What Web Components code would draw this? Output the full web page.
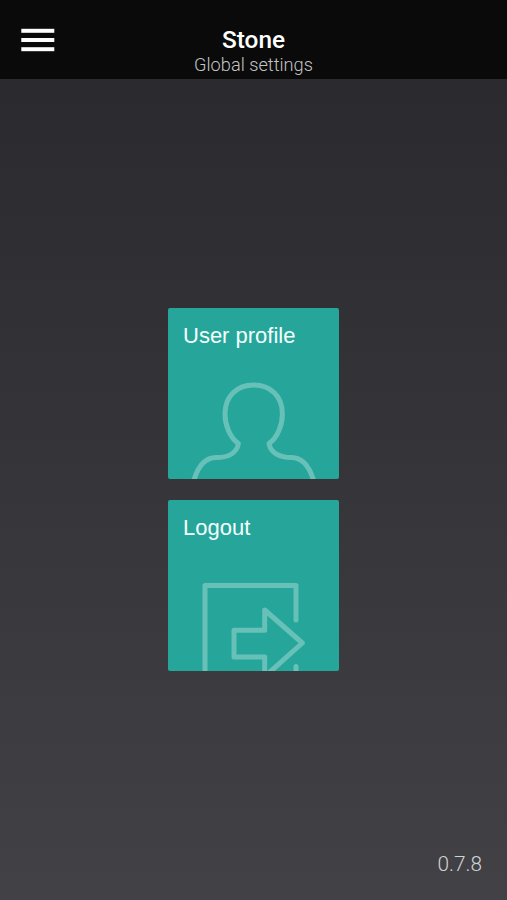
<!DOCTYPE html>
<html lang="en">
<head>
<meta charset="utf-8">
<title>Stone</title>
<style>
body {
  margin: 0;
}
</style>
</head>
<body>

<app-screen>
  <app-header slot="header">
    <span slot="title">Stone</span>
    <span slot="subtitle">Global settings</span>
  </app-header>
  <menu-tile icon="profile">User profile</menu-tile>
  <menu-tile icon="logout">Logout</menu-tile>
  <span slot="version">0.7.8</span>
</app-screen>

<script>
class AppScreen extends HTMLElement {
  connectedCallback() {
    const shadow = this.attachShadow({mode: 'open'});
    shadow.innerHTML = `
<style>
:host {
  display: flex;
  flex-direction: column;
  height: 900px;
  overflow: hidden;
  background: linear-gradient(#27272b, #2b2b2f 10%, #353539 50%, #424146);
  font-family: Roboto, sans-serif;
}
main {
  flex: 1;
  display: flex;
  flex-direction: column;
  align-items: center;
  justify-content: center;
  gap: 21px;
  padding-top: 48px;
}
footer {
  display: flex;
  justify-content: flex-end;
  padding: 0 25px 23px;
  color: #d2d2d5;
  font-size: 20.8px;
  font-weight: 300;
  line-height: 25px;
}
</style>
<slot name="header"></slot>
<main><slot></slot></main>
<footer><slot name="version"></slot></footer>
`;
  }
}

customElements.define('app-screen', AppScreen);

/*******************************/

class AppHeader extends HTMLElement {
  connectedCallback() {
    const shadow = this.attachShadow({mode: 'open'});
    shadow.innerHTML = `
<style>
:host {
  display: grid;
  grid-template-columns: 76px 1fr 76px;
  height: 79px;
  background: #0a0a0a;
}
svg {
  display: block;
  margin: 28px 0 0 21px;
}
.titles {
  padding-top: 26px;
  text-align: center;
}
.title {
  color: #fff;
  font-size: 24.4px;
  font-weight: 500;
  line-height: 28px;
}
.subtitle {
  color: #c4c4c4;
  font-size: 18.2px;
  font-weight: 300;
  line-height: 22px;
}
</style>
<svg width="34" height="24" fill="#fff">
  <rect x="0.3" y="0.8" width="33" height="4"/>
  <rect x="0.3" y="10" width="33" height="4"/>
  <rect x="0.3" y="19.2" width="33" height="4"/>
</svg>
<div class="titles">
  <div class="title"><slot name="title"></slot></div>
  <div class="subtitle"><slot name="subtitle"></slot></div>
</div>
`;
  }
}

customElements.define('app-header', AppHeader);

/*******************************/

const icons = {
  profile: `
    <path d="M25.700 173C30 158 37 149.500 48 149.500C60 149.500 69 145 70.400 135.500C62 130 57 117 57 106C57 88 69 77 85.700 77C102.400 77 114.400 88 114.400 106C114.400 117 109.400 130 101 135.500C102.400 145 112 149.500 123.400 149.500C135 149.500 141.400 158 145.700 173"/>`,
  logout: `
    <path d="M37 176V85.500H128V120M128 166.500V176"/>
    <path d="M66 130.300H96.700V110L134.300 143L96.700 176.600V157H66Z"/>`
};

class MenuTile extends HTMLElement {
  connectedCallback() {
    const shadow = this.attachShadow({mode: 'open'});
    shadow.innerHTML = `
<style>
:host {
  display: grid;
  width: 171px;
  height: 171px;
  border-radius: 2px;
  overflow: hidden;
  background: #26a69a;
  color: #f4fffd;
  font: 22px/26px "Liberation Sans", sans-serif;
}
svg, .label {
  grid-area: 1 / 1;
}
.label {
  padding: 15px;
}
</style>
<svg width="171" height="171" fill="none" stroke="#67c1b8" stroke-width="5" stroke-linejoin="round" stroke-linecap="round">${icons[this.getAttribute('icon')]}</svg>
<div class="label"><slot></slot></div>
`;
  }
}

customElements.define('menu-tile', MenuTile);
</script>
</body>
</html>
